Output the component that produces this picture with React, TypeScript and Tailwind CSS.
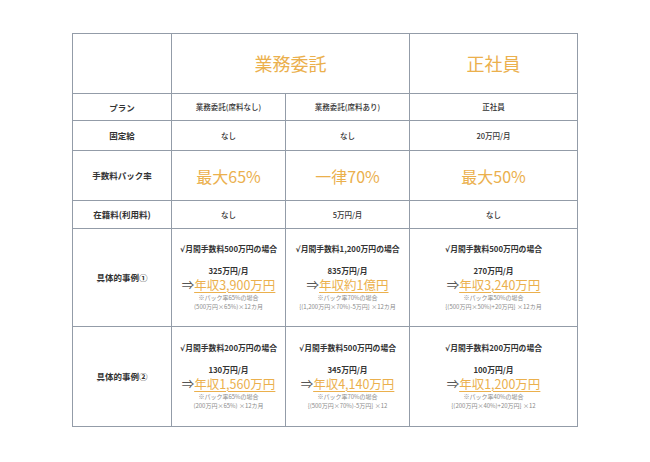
const orange = "text-[#ebb04d]";

type Example = {
  cond: string;
  monthly: string;
  annual: string;
  note1: string;
  note2: string;
};

const row1: Example[] = [
  {
    cond: "月間手数料500万円の場合",
    monthly: "325万円/月",
    annual: "年収3,900万円",
    note1: "※パック率65%の場合",
    note2: "(500万円×65%)×12カ月",
  },
  {
    cond: "月間手数料1,200万円の場合",
    monthly: "835万円/月",
    annual: "年収約1億円",
    note1: "※パック率70%の場合",
    note2: "{(1,200万円×70%)-5万円} ×12カ月",
  },
  {
    cond: "月間手数料500万円の場合",
    monthly: "270万円/月",
    annual: "年収3,240万円",
    note1: "※パック率50%の場合",
    note2: "{(500万円×50%)+20万円} ×12カ月",
  },
];

const row2: Example[] = [
  {
    cond: "月間手数料200万円の場合",
    monthly: "130万円/月",
    annual: "年収1,560万円",
    note1: "※パック率65%の場合",
    note2: "(200万円×65%) ×12カ月",
  },
  {
    cond: "月間手数料500万円の場合",
    monthly: "345万円/月",
    annual: "年収4,140万円",
    note1: "※パック率70%の場合",
    note2: "{(500万円×70%)-5万円} ×12",
  },
  {
    cond: "月間手数料200万円の場合",
    monthly: "100万円/月",
    annual: "年収1,200万円",
    note1: "※パック率40%の場合",
    note2: "{(200万円×40%)+20万円} ×12",
  },
];

const cell = "border border-[#939ca8] text-center align-middle";
const label = "text-[8.5px] font-bold text-[#333]";
const body = "text-[7.5px] font-medium text-[#333]";

const ExampleCell = ({ ex }: { ex: Example }) => (
  <td className={cell}>
    <div className="flex flex-col items-center leading-none">
      <p className="text-[7.8px] font-bold text-[#333]">
        <span className="text-[#333]" style={{ fontFamily: '"DejaVu Sans", sans-serif' }}>
          √
        </span>
        {ex.cond}
      </p>
      <p className="mt-[13px] text-[7.8px] font-bold text-[#333]">{ex.monthly}</p>
      <p className="mt-[3px] text-[12.5px] leading-[14px]">
        <span className="text-[#555]">⇒</span>
        <span className={`${orange} underline decoration-[#ebb04d] decoration-1 underline-offset-2`}>
          {ex.annual}
        </span>
      </p>
      <p className="mt-[3px] text-[6px] text-[#8a8a8a]">{ex.note1}</p>
      <p className="mt-[3px] text-[6px] text-[#8a8a8a]">{ex.note2}</p>
    </div>
  </td>
);

export default function App() {
  return (
    <div
      className="w-[650px] h-[462px] bg-white pt-[33px]"
      style={{ fontFamily: '"Noto Sans CJK JP", "Noto Sans", sans-serif' }}
    >
      <table className="mx-auto w-[505px] table-fixed border-collapse">
        <colgroup>
          <col className="w-[99px]" />
          <col className="w-[114px]" />
          <col className="w-[124px]" />
          <col className="w-[168px]" />
        </colgroup>
        <tbody>
          <tr className="h-[60px]">
            <td className={cell}></td>
            <td className={cell} colSpan={2}>
              <span className={`text-[18px] ${orange}`}>業務委託</span>
            </td>
            <td className={cell}>
              <span className={`text-[18px] ${orange}`}>正社員</span>
            </td>
          </tr>
          <tr className="h-[27px]">
            <td className={`${cell} ${label}`}>プラン</td>
            <td className={`${cell} ${body}`}>業務委託(席料なし)</td>
            <td className={`${cell} ${body}`}>業務委託(席料あり)</td>
            <td className={`${cell} ${body}`}>正社員</td>
          </tr>
          <tr className="h-[30px]">
            <td className={`${cell} ${label}`}>固定給</td>
            <td className={`${cell} ${body}`}>なし</td>
            <td className={`${cell} ${body}`}>なし</td>
            <td className={`${cell} ${body}`}>20万円/月</td>
          </tr>
          <tr className="h-[50px]">
            <td className={`${cell} ${label}`}>手数料パック率</td>
            <td className={`${cell} text-[16px] ${orange}`}>最大65%</td>
            <td className={`${cell} text-[16px] ${orange}`}>一律70%</td>
            <td className={`${cell} text-[16px] ${orange}`}>最大50%</td>
          </tr>
          <tr className="h-[28px]">
            <td className={`${cell} ${label}`}>在籍料(利用料)</td>
            <td className={`${cell} ${body}`}>なし</td>
            <td className={`${cell} ${body}`}>5万円/月</td>
            <td className={`${cell} ${body}`}>なし</td>
          </tr>
          <tr className="h-[98px]">
            <td className={`${cell} ${label}`}>具体的事例①</td>
            {row1.map((ex, i) => (
              <ExampleCell key={i} ex={ex} />
            ))}
          </tr>
          <tr className="h-[100px]">
            <td className={`${cell} ${label}`}>具体的事例②</td>
            {row2.map((ex, i) => (
              <ExampleCell key={i} ex={ex} />
            ))}
          </tr>
        </tbody>
      </table>
    </div>
  );
}
